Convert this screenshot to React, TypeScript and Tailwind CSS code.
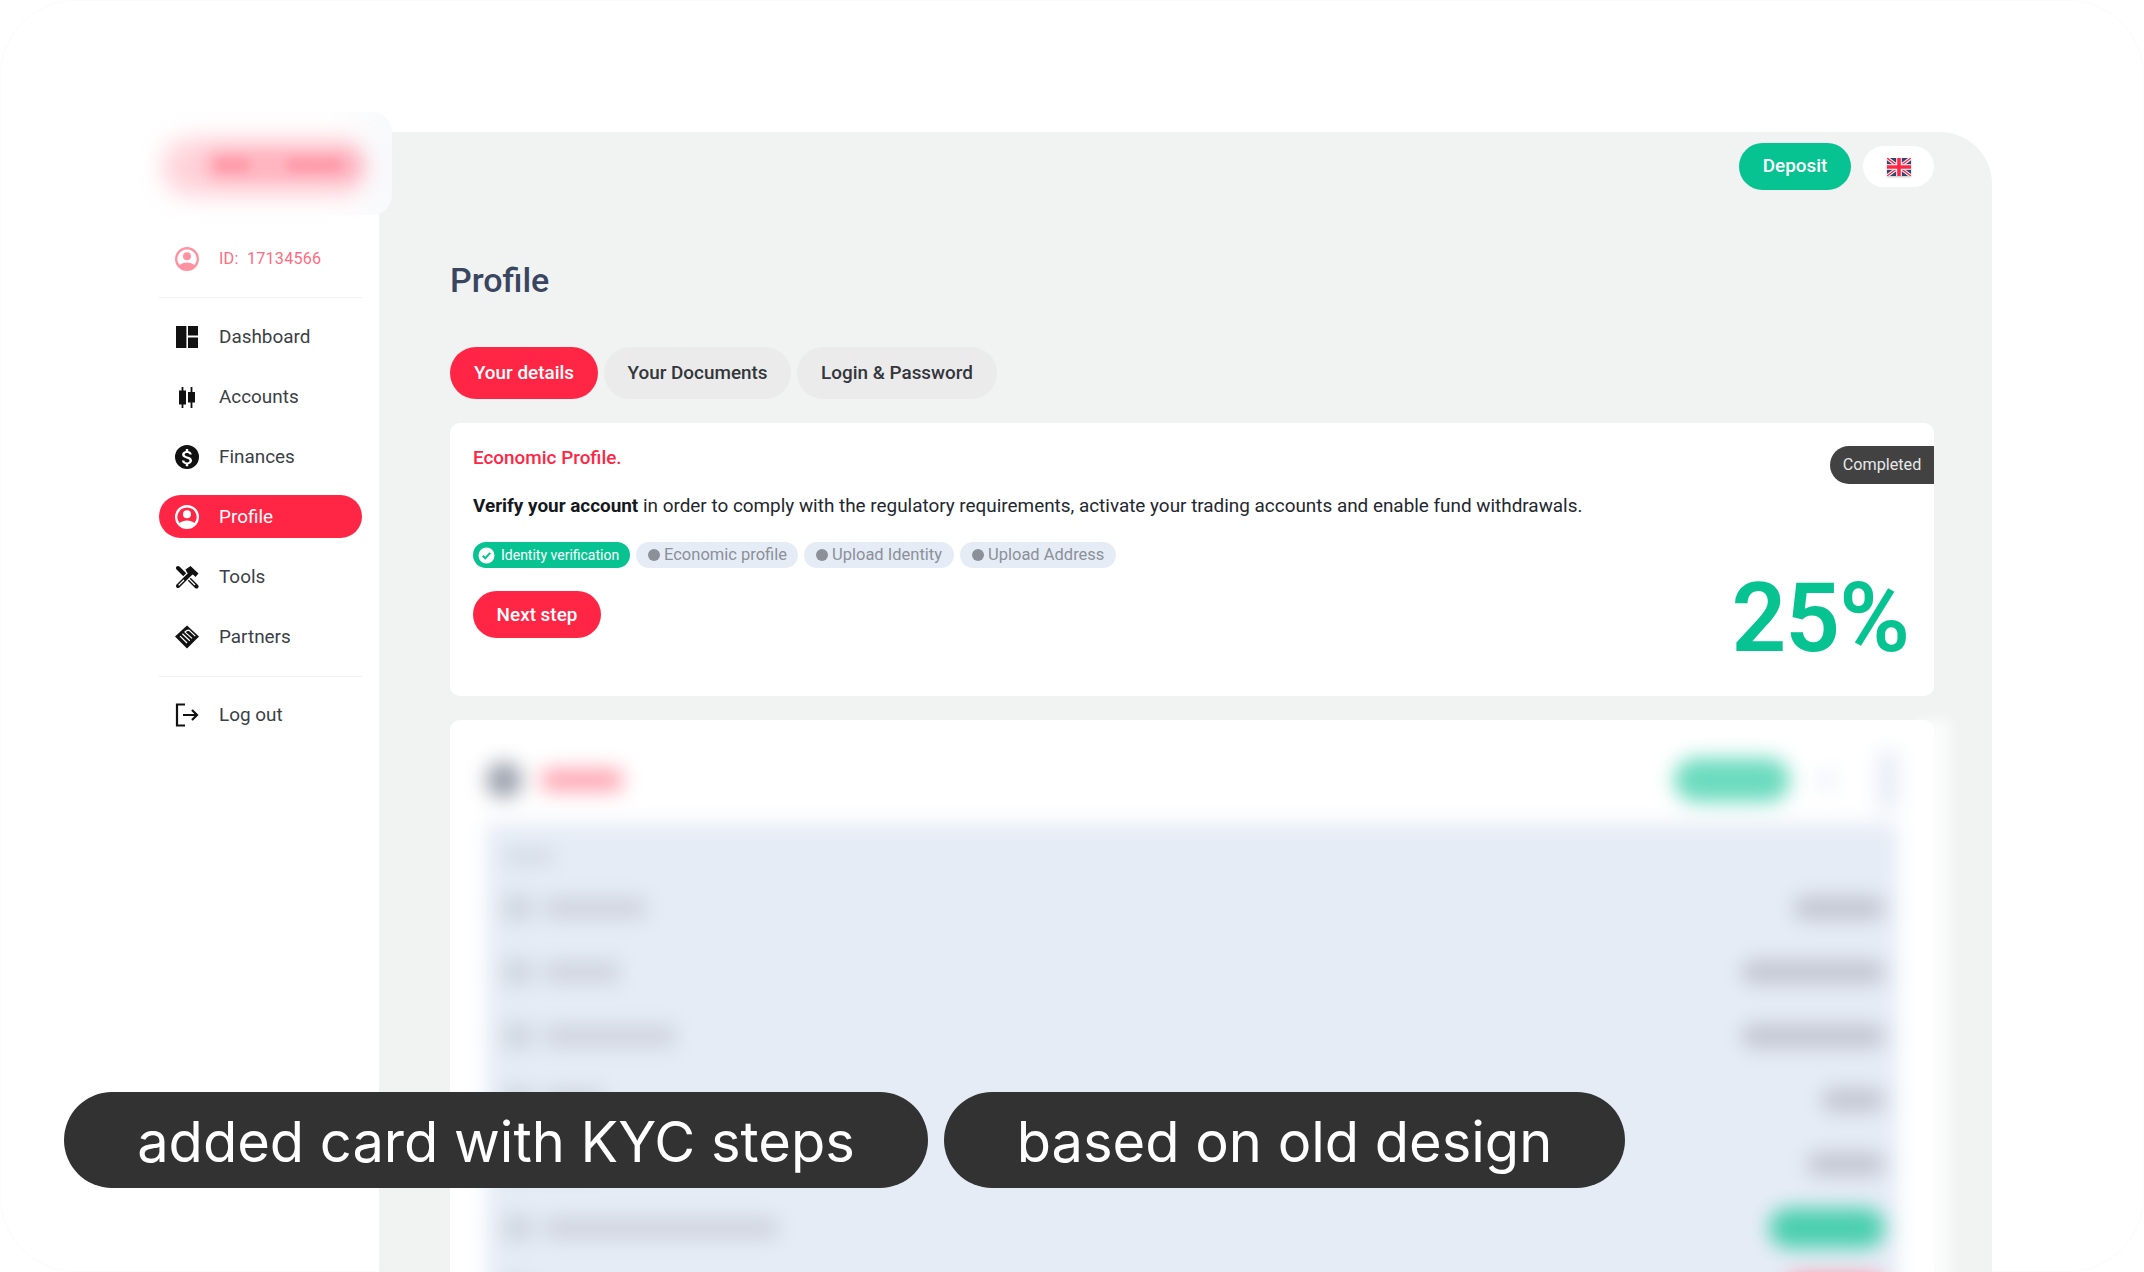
import React from "react";

const font = { fontFamily: "Roboto, sans-serif" };

const I = ({ children, c = "#111" }: { children: React.ReactNode; c?: string }) => (
  <svg width="24" height="24" viewBox="0 0 24 24" fill={c} className="shrink-0">{children}</svg>
);

const Person = ({ c }: { c: string }) => (
  <I c={c}>
    <path fillRule="evenodd" d="M12 0a12 12 0 1 0 0 24 12 12 0 0 0 0-24Zm0 2.4a9.6 9.6 0 0 1 7.4 15.7c-1.8-1.6-4.5-2.5-7.4-2.5s-5.6.9-7.4 2.5A9.6 9.6 0 0 1 12 2.4Z" />
    <circle cx="12" cy="9.2" r="4" />
  </I>
);

const icons: Record<string, React.ReactNode> = {
  Dashboard: (
    <I>
      <path d="M1 1h10.4v22H1zM13 1h10v9.5H13zM13 12.5h10V23H13z" />
    </I>
  ),
  Accounts: (
    <I>
      <path d="M6.6 2h1.8v3.5h2.6v14H8.4V23H6.6v-3.5H4v-14h2.6zM15.6 2h1.8v5H20v10.5h-2.6V23h-1.8v-5.5H13V7h2.6z" />
    </I>
  ),
  Finances: (
    <I>
      <path fillRule="evenodd" d="M12 0a12 12 0 1 0 0 24 12 12 0 0 0 0-24Zm1.2 4v2c1.9.3 3.4 1.5 3.6 3.6h-2.4c-.1-1.1-1-1.7-2.4-1.7-1.5 0-2.4.7-2.4 1.7 0 .9.7 1.4 2.6 1.9 2.7.7 4.8 1.6 4.8 4.1 0 2-1.5 3.3-3.8 3.7v2h-2.4v-2c-2-.4-3.7-1.7-3.9-3.8h2.4c.1 1.2 1.1 1.9 2.7 1.9 1.8 0 2.5-.9 2.5-1.7 0-1-.6-1.6-2.9-2.2-2.5-.6-4.5-1.6-4.5-3.9 0-1.9 1.5-3.2 3.7-3.6V4Z" />
    </I>
  ),
  Tools: (
    <svg width="24" height="24" viewBox="0 0 24 24" className="shrink-0">
      <path d="M3 3l18.5 18.5" stroke="#111" strokeWidth="4" strokeLinecap="round" fill="none" />
      <path d="M14 14l6 6" stroke="#fff" strokeWidth="1.2" fill="none" />
      <path d="M3 21 15 9" stroke="#fff" strokeWidth="6.5" fill="none" />
      <path d="M3 21 15 9" stroke="#111" strokeWidth="4" strokeLinecap="round" fill="none" />
      <path d="M3.6 20.4 9 15" stroke="#fff" strokeWidth="1.2" fill="none" />
      <path d="M10.5 4.5 15.5 1l8 7.5-3 3.5-2.5-2.5-2.5 1L12 7.5z" fill="#111" />
    </svg>
  ),
  Partners: (
    <svg width="24" height="24" viewBox="-1 -0.5 26 25" className="shrink-0">
      <path d="M12 -0.5 25 11.5 12 24.5 -1 11.5Z" fill="#111" />
      <path d="M4.5 11 12 18.5M7 8.5 15 16M9.5 6.5 17.5 13.5M9.5 6.5Q12 4.5 14 4.5L21 11" stroke="#fff" strokeWidth="1.3" fill="none" />
    </svg>
  ),
  "Log out": (
    <svg width="24" height="24" viewBox="0 0 24 24" fill="none" stroke="#111" strokeWidth="2.2" className="shrink-0">
      <path d="M10 1.5H2v21h8M8 12h14M17 7l5 5-5 5" />
    </svg>
  ),
};

const Nav = ({ label, active }: { label: string; active?: boolean }) => (
  <div
    className={`flex h-[43px] items-center gap-[20px] rounded-full pl-[16px] text-[18.9px] ${
      active ? "bg-[#ff2645] text-white" : "text-[#3b3f46]"
    }`}
  >
    {active ? <Person c="#fff" /> : icons[label]}
    <span className="pt-[2px]">{label}</span>
  </div>
);

const Chip = ({ children, w }: { children: string; w: string }) => (
  <span className={`flex h-[26px] items-center gap-[4px] rounded-full bg-[#e6ecf6] pl-[12px] text-[16.5px] text-[#8b9099] ${w}`}>
    <span className="h-[12px] w-[12px] rounded-full bg-[#8b9099]" />
    {children}
  </span>
);

const BlurRow = ({ l, w, g, r }: { l: string; w: string; g?: boolean; r?: boolean }) => (
  <div className="flex h-[64px] items-center justify-between pl-[18px] pr-[13px]">
    <div className="flex items-center gap-[12px]">
      <span className="h-[26px] w-[28px] rounded bg-[#cfd4de]" />
      <span className={`h-[22px] rounded bg-[#cfd4de] ${l}`} />
    </div>
    <span className={`rounded-full ${g ? "h-[40px] bg-[#07c392]/70" : r ? "h-[30px] bg-[#ff7a8e]" : "h-[24px] bg-[#c2c6d1]"} ${w}`} />
  </div>
);

const UkFlag = () => (
  <svg width="24" height="18" viewBox="0 0 24 18" className="drop-shadow-[0_1px_1px_rgba(0,0,0,0.25)]">
    <rect width="24" height="18" rx="2" fill="#36436f" />
    <path d="M0 0 24 18M24 0 0 18" stroke="#fff" strokeWidth="3.4" />
    <path d="M0 0 24 18M24 0 0 18" stroke="#ff2645" strokeWidth="1.4" />
    <path d="M12 0v18M0 9h24" stroke="#fff" strokeWidth="5.6" />
    <path d="M12 0v18M0 9h24" stroke="#ff2645" strokeWidth="3.6" />
  </svg>
);

export default function App() {
  return (
    <div className="relative h-[1272px] w-[2144px] overflow-hidden bg-white" style={font}>
      <div className="pointer-events-none absolute inset-0 rounded-[76px] border border-[#fbfbfb]" />
      <div className="relative flex h-full pt-[112px]">
        {/* sidebar */}
        <aside className="relative z-10 w-[392px] shrink-0 pl-[159px]">
          <div className="absolute left-[130px] top-0 h-[103px] w-[262px] rounded-r-[20px] bg-linear-to-r from-white from-75% to-[#f8f9fb]">
            <div className="absolute left-[32px] top-[26px] h-[58px] w-[204px] rounded-full bg-[#ff6a80]/30 blur-[12px]" />
            <div className="absolute left-[74px] top-[36px] h-[34px] w-[158px] rounded-full bg-[#ff5a72]/25 blur-[8px]" />
            <div className="absolute left-[84px] top-[45px] h-[16px] w-[36px] rounded-full bg-[#ff3c58]/20 blur-[5px]" />
            <div className="absolute left-[156px] top-[45px] h-[16px] w-[56px] rounded-full bg-[#ff3c58]/20 blur-[5px]" />
          </div>
          <div className="w-[203px] pt-[127px]">
            <div className="flex h-[40px] items-center gap-[20px] pl-[16px] text-[16.2px] tracking-[0.2px] text-[#ff6c80]">
              <span className="opacity-50"><Person c="#ff2645" /></span>
              <span className="whitespace-pre">ID:  17134566</span>
            </div>
            <div className="mt-[18px] h-px bg-[#f0f1f2]" />
            <div className="mt-[17px] flex flex-col gap-[17px]">
              <Nav label="Dashboard" />
              <Nav label="Accounts" />
              <Nav label="Finances" />
              <Nav label="Profile" active />
              <Nav label="Tools" />
              <Nav label="Partners" />
            </div>
            <div className="mt-[18px] h-px bg-[#f0f1f2]" />
            <div className="mt-[16px]"><Nav label="Log out" /></div>
          </div>
        </aside>

        {/* main */}
        <main className="relative mt-[20px] -ml-[13px] h-[1140px] w-[1613px] rounded-tr-[52px] bg-[#f1f3f3] pl-[71px] pr-[58px]">
          <div className="flex items-center justify-end gap-[12px] pt-[11px]">
            <div className="flex h-[47px] w-[112px] items-center justify-center rounded-full bg-[#07c392] text-[18.9px] font-medium text-white">Deposit</div>
            <div className="flex h-[41px] w-[71px] items-center justify-center rounded-full bg-white"><UkFlag /></div>
          </div>
          <h1 className="mt-[67px] text-[34px] font-medium leading-[46px] text-[#3a4560]">Profile</h1>
          <div className="mt-[44px] flex gap-[6px] text-[18.9px] font-medium">
            <div className="flex h-[52px] w-[148px] items-center justify-center rounded-full bg-[#ff2645] pt-px text-white">Your details</div>
            <div className="flex h-[52px] w-[187px] items-center justify-center rounded-full bg-[#ebebeb] pt-px text-[#33363b]">Your Documents</div>
            <div className="flex h-[52px] w-[200px] items-center justify-center rounded-full bg-[#ebebeb] pt-px text-[#33363b]">Login &amp; Password</div>
          </div>

          {/* KYC card */}
          <section className="relative mt-[24px] h-[273px] rounded-[10px] bg-white pl-[23px] pt-[22px]">
            <div className="absolute right-0 top-[23px] flex h-[38px] w-[104px] items-center justify-center rounded-l-full bg-[#424242] text-[16.2px] text-[#e8e8e8]">Completed</div>
            <h2 className="text-[18.9px] font-medium leading-[26px] text-[#ff2645]">Economic Profile.</h2>
            <p className="mt-[22px] text-[18.9px] leading-[26px] text-[#23272e]">
              <b className="font-bold text-[#15181c]">Verify your account</b> in order to comply with the regulatory requirements, activate your trading accounts and enable fund withdrawals.
            </p>
            <div className="mt-[23px] flex gap-[6px]">
              <span className="flex h-[26px] w-[157px] items-center gap-[6px] rounded-full bg-[#07c392] pl-[5px] text-[14px] text-white">
                <svg width="17" height="17" viewBox="0 0 17 17"><circle cx="8.5" cy="8.5" r="8" fill="#fff" /><path d="M4.7 8.7l2.6 2.6 5-5.4" fill="none" stroke="#07c392" strokeWidth="2" /></svg>
                Identity verification
              </span>
              <Chip w="w-[162px]">Economic profile</Chip>
              <Chip w="w-[150px]">Upload Identity</Chip>
              <Chip w="w-[156px]">Upload Address</Chip>
            </div>
            <div className="mt-[23px] flex h-[47px] w-[128px] items-center justify-center rounded-full bg-[#ff2645] pt-px text-[18.9px] font-medium text-white">Next step</div>
            <div className="absolute right-[25px] top-[137px] text-[96px] font-semibold leading-[116px] tracking-[-1px] text-[#07c392]">25%</div>
          </section>

          {/* blurred card */}
          <section className="relative mt-[24px] h-[560px] rounded-t-[10px] bg-white">
            <div className="absolute -right-[16px] top-0 h-full w-[32px] bg-white/70 blur-[6px]" />
            <div className="relative h-full overflow-hidden rounded-t-[10px]">
              <div className="h-full px-[36px] blur-[10px]">
                <div className="flex h-[103px] items-center justify-between pt-[16px]">
                  <div className="flex items-center gap-[20px]">
                    <span className="h-[36px] w-[36px] rounded-full bg-[#9aa0ac]" />
                    <span className="h-[22px] w-[80px] rounded bg-[#ffa3b1]" />
                  </div>
                  <div className="flex items-center">
                    <span className="h-[44px] w-[116px] rounded-full bg-[#07c392]/60" />
                    <span className="ml-[30px] h-[18px] w-[14px] rounded bg-[#e6ecf6]" />
                    <span className="ml-[44px] h-[60px] w-[20px] rounded bg-[#e6ecf6]" />
                  </div>
                </div>
                <div className="h-[500px] bg-[#e6ecf6] pt-[27px]">
                  <div className="ml-[18px] h-[14px] w-[50px] rounded bg-[#d3d8e2]" />
                  <div className="mt-[12px]">
                    <BlurRow l="w-[102px]" w="w-[92px]" />
                    <BlurRow l="w-[76px]" w="w-[144px]" />
                    <BlurRow l="w-[132px]" w="w-[144px]" />
                    <BlurRow l="w-[60px]" w="w-[64px]" />
                    <BlurRow l="w-[60px]" w="w-[78px]" />
                    <BlurRow l="w-[234px]" w="w-[116px]" g />
                    <BlurRow l="w-[0px]" w="w-[100px]" r />
                  </div>
                </div>
              </div>
            </div>
          </section>
        </main>
      </div>

      {/* captions */}
      <div className="absolute left-[64px] top-[1092px] flex gap-[16px] text-[56px] text-white" style={{ fontFamily: "Inter, sans-serif" }}>
        <div className="flex h-[96px] w-[864px] items-center justify-center rounded-[48px] bg-[#323232] pt-[3px]">added card with KYC steps</div>
        <div className="flex h-[96px] w-[681px] items-center justify-center rounded-[48px] bg-[#323232] pt-[3px]">based on old design</div>
      </div>
    </div>
  );
}
